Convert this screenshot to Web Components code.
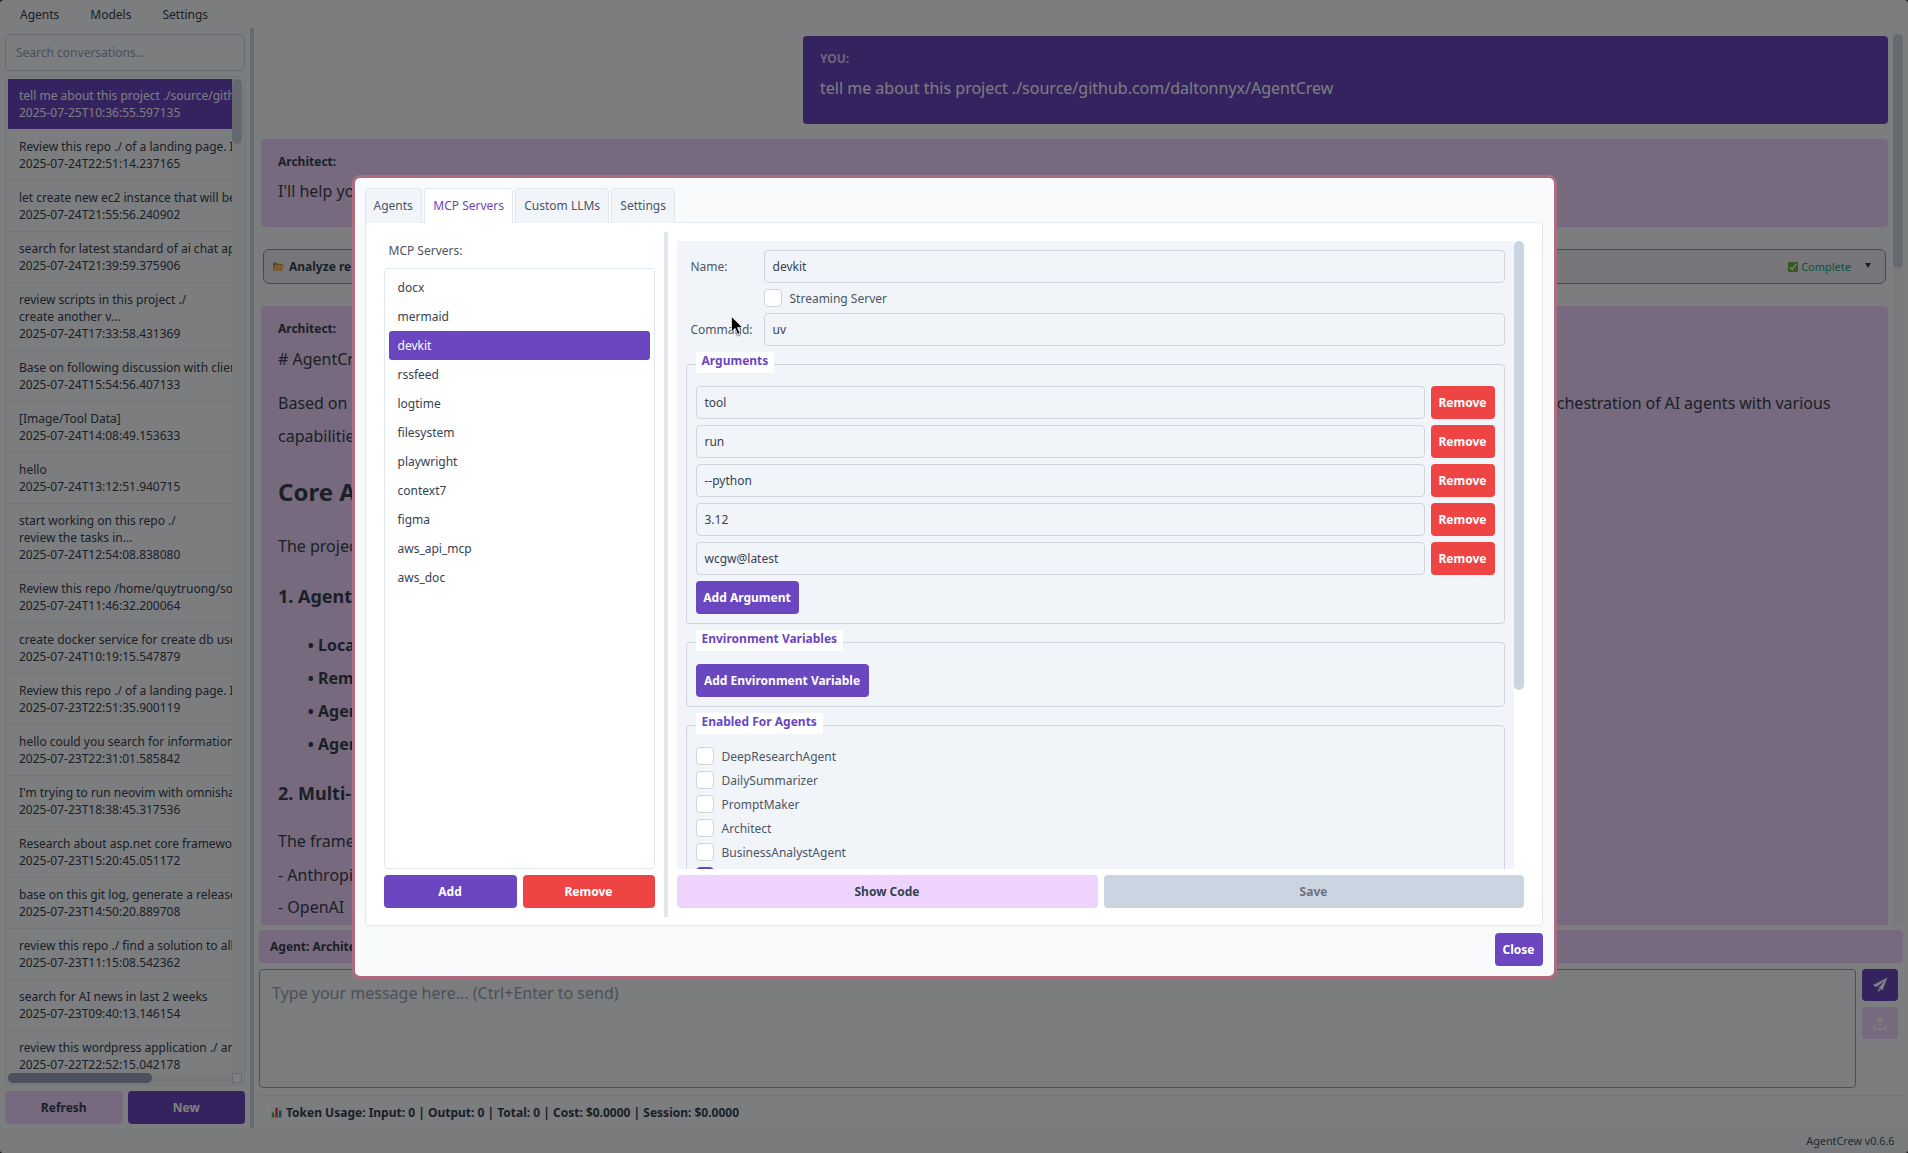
<!DOCTYPE html>
<html lang="en"><head><meta charset="utf-8"><title>AgentCrew</title>
<style>
html,body{margin:0;padding:0;background:#3c3c3c;width:1908px;height:1153px;overflow:hidden;font-family:"Noto Sans",sans-serif;}
</style></head><body>
<app-shell>
  <main-menu slot="menu"><span>Agents</span><span>Models</span><span>Settings</span></main-menu>
  <conv-sidebar slot="side">
    <conv-item selected>tell me about this project ./source/github.com/daltonnyx/AgentCrew<br>2025-07-25T10:36:55.597135</conv-item>
    <conv-item>Review this repo ./ of a landing page. I want to<br>2025-07-24T22:51:14.237165</conv-item>
    <conv-item>let create new ec2 instance that will be used<br>2025-07-24T21:55:56.240902</conv-item>
    <conv-item>search for latest standard of ai chat app design<br>2025-07-24T21:39:59.375906</conv-item>
    <conv-item>review scripts in this project ./<br>create another v...<br>2025-07-24T17:33:58.431369</conv-item>
    <conv-item>Base on following discussion with client, please<br>2025-07-24T15:54:56.407133</conv-item>
    <conv-item>[Image/Tool Data]<br>2025-07-24T14:08:49.153633</conv-item>
    <conv-item>hello<br>2025-07-24T13:12:51.940715</conv-item>
    <conv-item>start working on this repo ./<br>review the tasks in...<br>2025-07-24T12:54:08.838080</conv-item>
    <conv-item>Review this repo /home/quytruong/source/landing<br>2025-07-24T11:46:32.200064</conv-item>
    <conv-item>create docker service for create db user and<br>2025-07-24T10:19:15.547879</conv-item>
    <conv-item>Review this repo ./ of a landing page. I want to<br>2025-07-23T22:51:35.900119</conv-item>
    <conv-item>hello could you search for information about<br>2025-07-23T22:31:01.585842</conv-item>
    <conv-item>I'm trying to run neovim with omnisharp on my<br>2025-07-23T18:38:45.317536</conv-item>
    <conv-item>Research about asp.net core framework and its<br>2025-07-23T15:20:45.051172</conv-item>
    <conv-item>base on this git log, generate a release note for<br>2025-07-23T14:50:20.889708</conv-item>
    <conv-item>review this repo ./ find a solution to all of the<br>2025-07-23T11:15:08.542362</conv-item>
    <conv-item>search for AI news in last 2 weeks<br>2025-07-23T09:40:13.146154</conv-item>
    <conv-item>review this wordpress application ./ and tell me<br>2025-07-22T22:52:15.042178</conv-item>
  </conv-sidebar>
  <chat-panel slot="main">
    <chat-msg kind="user" label="YOU:"><p class="m">tell me about this project ./source/github.com/daltonnyx/AgentCrew</p></chat-msg>
    <chat-msg label="Architect:"><p class="m">I'll help you understand this project by checking the repository</p></chat-msg>
    <tool-box>Analyze repository structure</tool-box>
    <chat-msg label="Architect:" long>
      <rich-text>
        <p style="margin-top:6.4px;margin-bottom:10px"># AgentCrew Project Overview</p>
        <p id="lead" style="word-spacing:-.25px">Based on my analysis of the source and documentation found in this repository, AgentCrew is a multi-agent AI framework written in Python that offers a platform for the orchestration of AI agents with various capabilities, tools and models.</p>
        <h2>Core Architecture</h2>
        <p style="margin:22px 0 20px">The project is organized around several main components:</p>
        <h3>1. Agent System</h3>
        <ul><li>Local agents</li><li>Remote agents</li><li>Agent manager</li><li>Agent tools</li></ul>
        <h3 style="margin-top:19px">2. Multi-Provider Support</h3>
        <p style="margin:19.5px 0 0">The framework supports several providers:</p>
        <p>- Anthropic Claude</p>
        <p style="margin-top:-.6px">- OpenAI</p>
      </rich-text>
    </chat-msg>
  </chat-panel>
  <status-foot slot="foot">AgentCrew v0.6.6</status-foot>
</app-shell>

<modal-overlay>
  <settings-modal>
    <tab-bar>
      <tab-item style="width:57.4px">Agents</tab-item><tab-item active style="width:88.4px">MCP Servers</tab-item><tab-item style="width:93.4px">Custom LLMs</tab-item><tab-item style="width:63.4px">Settings</tab-item>
    </tab-bar>
    <mcp-pane>
      <server-list slot="left">
        <list-row>docx</list-row><list-row>mermaid</list-row><list-row selected>devkit</list-row><list-row>rssfeed</list-row><list-row>logtime</list-row><list-row>filesystem</list-row><list-row>playwright</list-row><list-row>context7</list-row><list-row>figma</list-row><list-row>aws_api_mcp</list-row><list-row>aws_doc</list-row>
      </server-list>
      <server-form slot="right">
        <form-row label="Name:"><text-field>devkit</text-field></form-row>
        <form-row label=""><check-row>Streaming Server</check-row></form-row>
        <form-row label="Command:"><text-field>uv</text-field></form-row>
        <group-box title="Arguments">
          <arg-row>tool</arg-row><arg-row>run</arg-row><arg-row>--python</arg-row><arg-row>3.12</arg-row><arg-row>wcgw@latest</arg-row>
          <div><ui-btn kind="primary" style="width:103px">Add Argument</ui-btn></div>
        </group-box>
        <group-box title="Environment Variables">
          <div><ui-btn kind="primary" style="width:173px">Add Environment Variable</ui-btn></div>
        </group-box>
        <group-box title="Enabled For Agents">
          <check-row>DeepResearchAgent</check-row><check-row>DailySummarizer</check-row><check-row>PromptMaker</check-row><check-row>Architect</check-row><check-row>BusinessAnalystAgent</check-row><check-row checked>CodeAssistant</check-row>
        </group-box>
      </server-form>
    </mcp-pane>
    <div style="display:flex;justify-content:flex-end"><ui-btn kind="primary" style="width:48px">Close</ui-btn></div>
  </settings-modal>
</modal-overlay>
<mouse-cursor></mouse-cursor>

<script>
const base=`*,:host{box-sizing:border-box}`;
function def(name,css,html,init){
  customElements.define(name,class extends HTMLElement{
    constructor(){super();const r=this.attachShadow({mode:'open'});r.innerHTML=`<style>${base}${css}</style>${html}`;if(init)init(this,r);}
  });
}
const C={p:'#6b46c1',l:'#eed4fc',bg:'#f8fafc',pn:'#f1f5f9',b:'#e2e8f0',b2:'#cbd5e1',t:'#374151',d:'#374151',r:'#ef4444'};

def('app-shell',`
  :host{display:flex;flex-direction:column;width:1908px;height:1153px;background:${C.bg};border-radius:4px;overflow:hidden;color:${C.d};font:12px/17px "Noto Sans",sans-serif}
  .body{display:flex;height:1100px}
  .split{width:4px;background:${C.b2};margin:0 0 0 5px;flex:none}
  ::slotted([slot=side]){flex:none}
  ::slotted([slot=main]){flex:1;min-width:0}
`,`<slot name="menu"></slot><div class="body"><slot name="side"></slot><div class="split"></div><slot name="main"></slot></div><slot name="foot"></slot>`);

def('main-menu',`
  :host{display:flex;height:28px;align-items:center;padding:0 0 0 20px;gap:31px;color:${C.d};font-size:12px;flex:none}
  ::slotted(span){display:block}
`,`<slot></slot>`);

def('fake-scroll',`
  :host{display:block;flex:none}
  .v{width:10px;height:100%;background:var(--track,transparent)}
  .h{height:10px;width:100%;background:var(--track,transparent)}
  i{display:block;background:${C.b2};border-radius:5px}
  .h i{background:#94a3b8}
`,`<div id="t"><i></i></div>`,(el,r)=>{
  queueMicrotask(()=>{const t=r.getElementById('t'),i=t.firstChild;
    if(el.getAttribute('dir')==='h'){t.className='h';i.style.height='100%';i.style.width=el.getAttribute('size')+'px';}
    else{t.className='v';i.style.width='100%';i.style.height=el.getAttribute('size')+'px';}});
});

def('conv-sidebar',`
  :host{display:flex;flex-direction:column;width:245px;padding:6px 0 4px 5px;gap:5px}
  .search{height:37px;border:1px solid ${C.b2};border-radius:5px;padding:0 10px;display:flex;align-items:center;color:#94a3b8;flex:none;background:${C.bg}}
  .box{height:1009px;border:1px solid ${C.b};border-radius:4px;padding:2px 2px 1px;display:flex;flex-direction:column;flex:none}
  .top{display:flex;height:994px}
  .items{flex:1;min-width:0;overflow:hidden}
  .bot{display:flex;height:10px}
  .bot fake-scroll{flex:1}
  .corner{width:10px;height:10px;border:1px solid ${C.b2};flex:none;background:#fff}
  .btns{display:flex;gap:5px;margin-top:1px}
  .btns ui-btn{flex:1}
  fake-scroll{--track:${C.pn}}
`,`<div class="search">Search conversations...</div>
  <div class="box"><div class="top"><div class="items"><slot></slot></div><fake-scroll size="65"></fake-scroll></div>
  <div class="bot"><fake-scroll dir="h" size="144"></fake-scroll><div class="corner"></div></div></div>
  <div class="btns"><ui-btn kind="light">Refresh</ui-btn><ui-btn kind="primary">New</ui-btn></div>`);

def('conv-item',`
  :host{display:block;padding:8px 0 8px 11px;border-bottom:1px solid ${C.b};white-space:nowrap;overflow:hidden;color:${C.d};line-height:17px}
  :host([selected]){background:${C.p};background-clip:padding-box;color:${C.bg};border-bottom-color:transparent}
`,`<slot></slot>`);

def('ui-btn',`
  :host{display:inline-flex;height:33px;align-items:center;justify-content:center;border-radius:4px;font:bold 12px/17px "Noto Sans",sans-serif;white-space:nowrap;flex:none}
  :host([kind=primary]){background:${C.p};color:#fff}
  :host([kind=light]){background:${C.l};color:#374151}
  :host([kind=danger]){background:${C.r};color:#fff}
  :host([kind=muted]){background:${C.b2};color:#6b7280}
`,`<slot></slot>`);

def('chat-panel',`
  :host{display:flex;flex-direction:column;padding:6px 5px 0 5px;height:1100px}
  .scroll{display:flex;height:891px;flex:none}
  .msgs{flex:1;min-width:0;overflow:hidden;padding:2px 5px 0 2px;display:flex;flex-direction:column}
  .agent{height:33px;margin-top:5px;background:${C.l};border-radius:4px;padding:0 11px;display:flex;align-items:center;font-weight:bold;flex:none;color:${C.d}}
  .input{display:flex;gap:6px;margin-top:6px;height:119px;flex:none}
  .ta{flex:1;border:1px solid #94a3b8;border-radius:4px;padding:11px 12px;font-size:16px;line-height:24px;color:#94a3b8;background:${C.bg}}
  .side{width:36px;margin-right:5px;display:flex;flex-direction:column;gap:6px}
  .ib{height:32px;border-radius:4px;display:flex;align-items:center;justify-content:center}
  .send{background:${C.p}}.up{background:${C.l}}
  .token{margin-top:7px;border-top:1px solid ${C.b};height:33px;display:flex;align-items:center;gap:4px;padding:0 0 0 12px;font-weight:bold;color:${C.d}}
  fake-scroll{--track:${C.pn}}
`,`<div class="scroll"><div class="msgs"><slot></slot></div><fake-scroll size="234"></fake-scroll></div>
  <div class="agent">Agent: Architect</div>
  <div class="input"><div class="ta">Type your message here... (Ctrl+Enter to send)</div>
    <div class="side">
      <div class="ib send"><svg width="16" height="16" viewBox="0 0 16 16"><path d="M15.4.6.7 8.3l3.9 1.7 8.2-6.6-6.2 7.5 4 2.3L15.4.6zM6.3 11.4v3.9l2.1-2.6-2.1-1.3z" fill="#fff"/></svg></div>
      <div class="ib up"><svg width="14" height="14" viewBox="0 0 16 16" fill="none" stroke="#fff" stroke-width="1.6" stroke-linecap="round" stroke-linejoin="round"><path d="M8 10.5V1.5M4.4 5 8 1.5 11.6 5M1.5 10.5v2.6c0 .8.6 1.4 1.4 1.4h10.2c.8 0 1.4-.6 1.4-1.4v-2.6"/></svg></div>
    </div></div>
  <div class="token"><svg width="11" height="11" viewBox="0 0 11 11"><rect width="11" height="11" fill="#f5f5f5"/><rect x=".8" y="5.5" width="2.3" height="5" fill="#4caf50"/><rect x="4.4" y=".8" width="2.3" height="9.7" fill="#e53935"/><rect x="8" y="3.5" width="2.3" height="7" fill="#1e88e5"/></svg><span>Token Usage: Input: 0 | Output: 0 | Total: 0 | Cost: $0.0000 | Session: $0.0000</span></div>`);

def('chat-msg',`
  :host{display:block;background:${C.l};border-radius:4px;padding:14px 17px 19px;flex:none;margin-bottom:15px;overflow:hidden;color:${C.d}}
  :host([kind=user]){background:${C.p};margin-left:542px;color:${C.bg}}
  .l{font-weight:bold;line-height:17px;margin-bottom:4px;display:block}
  :host([kind=user]) .l{color:#d8c8f0}
  ::slotted(p.m){margin:0;font-size:16px;line-height:34px}
  :host([long]){margin:0}
`,`<span class="l"></span><slot></slot>`,(el,r)=>{queueMicrotask(()=>{r.querySelector('.l').textContent=el.getAttribute('label')})});

def('rich-text',`
  :host{display:block;font-size:16px;line-height:33.5px;color:${C.d}}
  ::slotted(p){margin:0}
  ::slotted(h2){font-size:24px;line-height:33px;margin:21px 0 0;font-weight:bold}
  ::slotted(h3){font-size:18px;line-height:26px;margin:0;font-weight:bold}
  ::slotted(ul){margin:20px 0 0;padding:0 0 0 40px;list-style-type:"• ";font-weight:bold;line-height:32.8px}
`,`<slot></slot>`);

def('tool-box',`
  :host{display:flex;align-items:center;height:35px;margin:7px 2px 22px;border:1px solid #8e8cc0;border-radius:6px;background:#efeef6;padding:0 9px;flex:none;color:${C.d}}
  .t{font-weight:bold;margin-left:5px;flex:1}
  .c{color:#16a877;font-size:11px;display:flex;align-items:center;gap:3px;margin-right:14px}
  .a{width:0;height:0;border-left:3.5px solid transparent;border-right:3.5px solid transparent;border-top:5px solid #374151;margin:0 5px 2px 0}
`,`<svg width="11" height="11" viewBox="0 0 11 11"><path d="M0 1.5h3.6l1 1.2H9.6V4.5H2.2L0 10z" fill="#c8903a"/><path d="M2.4 4.2H11L9 10H.2z" fill="#f2bc58"/></svg>
  <span class="t"><slot></slot></span>
  <span class="c"><svg width="10" height="10" viewBox="0 0 10 10"><rect width="10" height="10" rx="1" fill="#6db33f"/><path d="M2 5.2 4.2 7.6 8.2 2" fill="none" stroke="#e8f5e0" stroke-width="1.5"/></svg>Complete</span><span class="a"></span>`);

def('status-foot',`
  :host{display:flex;height:25px;align-items:center;justify-content:flex-end;padding:0 13.5px 0 0;background:${C.pn};color:#475569;font-size:10.8px;flex:none}
`,`<slot></slot>`);

def('modal-overlay',`
  :host{position:absolute;left:0;top:0;width:1908px;height:1153px;background:rgba(0,0,0,.5);display:flex;align-items:center;justify-content:center}
`,`<slot></slot>`);

def('settings-modal',`
  :host{display:flex;flex-direction:column;width:1205px;height:804px;border:3px solid #ad6d7f;border-radius:8px;background:${C.bg};padding:10px 11px 10px 10px;color:${C.t};font:12px/17px "Noto Sans",sans-serif}
`,`<slot></slot>`);

def('tab-bar',`:host{display:flex;gap:2.6px;height:34px;position:relative;z-index:1;flex:none}`,`<slot></slot>`);
def('tab-item',`
  :host{display:flex;align-items:center;justify-content:center;height:35px;background:${C.pn};border:1px solid ${C.b};border-bottom:0;border-radius:4px 4px 0 0;color:#4b5563;flex:none}
  :host([active]){background:#fff;color:${C.p}}
`,`<slot></slot>`);

def('mcp-pane',`
  :host{display:flex;height:704px;margin-bottom:7px;background:#fff;border:1px solid ${C.b};border-radius:0 4px 4px 4px;padding:9px 18px 8px 18px;flex:none}
  .split{width:4px;background:${C.b};flex:none}
  ::slotted([slot=left]){width:280px;flex:none}
  ::slotted([slot=right]){flex:1;min-width:0}
`,`<slot name="left"></slot><div class="split"></div><slot name="right"></slot>`);

def('server-list',`
  :host{display:flex;flex-direction:column;padding:9px 9px 9px 0}
  .lab{height:20px;line-height:20px;padding-left:5px;color:#4b5563;margin-bottom:7px;flex:none}
  .list{height:601px;border:1px solid ${C.b};border-radius:4px;padding:4px;background:#fff;flex:none}
  .btns{display:flex;gap:6px;margin-top:6px}
  .btns ui-btn{flex:1}
  .btns ui-btn:first-child{flex:0 0 133px}
`,`<div class="lab">MCP Servers:</div><div class="list"><slot></slot></div>
  <div class="btns"><ui-btn kind="primary">Add</ui-btn><ui-btn kind="danger">Remove</ui-btn></div>`);

def('list-row',`
  :host{display:flex;height:29px;align-items:center;padding:0 9px;border-radius:3px;color:${C.t}}
  :host([selected]){background:${C.p};color:#fff}
`,`<slot></slot>`);

def('server-form',`
  :host{display:flex;flex-direction:column;padding:9px 0 9px 9px}
  .wrap{display:flex;height:628px;flex:none}
  .scroll{flex:1;min-width:0;height:628px;overflow:hidden;background:${C.pn};padding:9px 9px 0 14px;display:flex;flex-direction:column;gap:6px}
  .btns{display:flex;gap:6px;margin-top:6px}
  .btns ui-btn{flex:1}
  .btns ui-btn:first-child{flex:0 0 421px}
`,`<div class="wrap"><div class="scroll"><slot></slot></div><fake-scroll size="449"></fake-scroll></div>
  <div class="btns"><ui-btn kind="light">Show Code</ui-btn><ui-btn kind="muted">Save</ui-btn></div>`);

def('form-row',`
  :host{display:flex;flex:none}
  .l{width:73px;flex:none;display:flex;align-items:center;color:#4b5563}
  .c{flex:1;min-width:0}
`,`<span class="l"></span><div class="c"><slot></slot></div>`,(el,r)=>{queueMicrotask(()=>{r.querySelector('.l').textContent=el.getAttribute('label')})});

def('text-field',`
  :host{display:flex;height:33px;align-items:center;border:1px solid #d1d5db;border-radius:4px;padding:0 8px;color:${C.t};background:${C.pn};flex:1;min-width:0}
`,`<slot></slot>`);

def('check-row',`
  :host{display:flex;align-items:center;gap:8px;height:18px;color:#4b5563;flex:none}
  .b{width:18px;height:18px;background:#fff;border:1px solid #d1d5db;border-radius:4px;flex:none}
  .t{padding-top:1px}
  :host([checked]) .b{background:${C.p};border-color:${C.p}}
`,`<span class="b"></span><span class="t"><slot></slot></span>`);

def('group-box',`
  :host{display:block;position:relative;margin:12px 0 0 -5px;flex:none;border:1px solid #d1d5db;border-radius:4px;padding:21px 9px 9px}
  .lg{position:absolute;left:9px;top:-13px;height:21px;padding:0 6px;background:#fff;color:${C.p};font-weight:bold;display:flex;align-items:flex-start}
  .c{display:flex;flex-direction:column;gap:6px}
`,`<span class="lg"></span><div class="c"><slot></slot></div>`,(el,r)=>{queueMicrotask(()=>{r.querySelector('.lg').textContent=el.getAttribute('title')})});

def('arg-row',`
  :host{display:flex;gap:6px;flex:none}
  ui-btn{width:64px}
`,`<text-field><slot></slot></text-field><ui-btn kind="danger">Remove</ui-btn>`);

def('mouse-cursor',`
  :host{position:absolute;left:731px;top:316px;width:13px;height:22px;display:block}
`,`<svg width="13" height="22" viewBox="0 0 13 22"><ellipse cx="7.5" cy="18" rx="2.5" ry="2.5" fill="#000" opacity=".25"/><path d="M.5.5v15.2l3.6-3.4 2.6 6 2.3-1-2.6-5.9h5.1z" fill="#000" stroke="#fff" stroke-width=".7"/></svg>`);
</script>
</body></html>
